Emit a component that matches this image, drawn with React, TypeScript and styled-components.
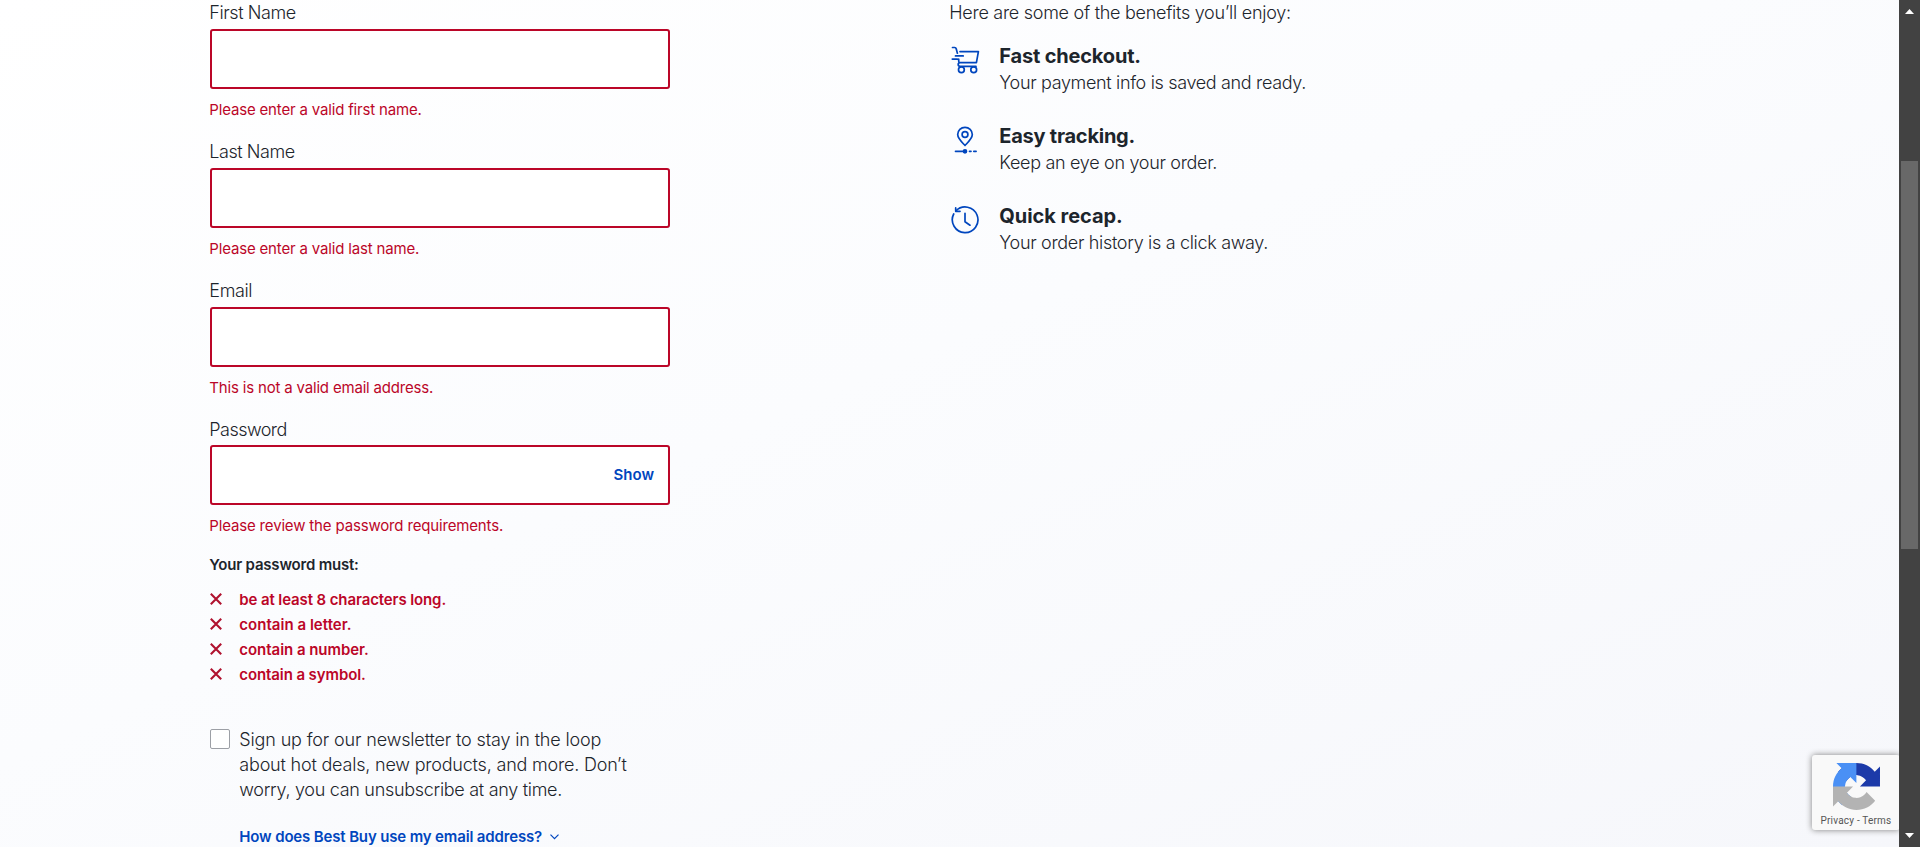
import React from "react";
import styled, { createGlobalStyle } from "styled-components";

const red = "#bb0628";
const blue = "#0046be";
const ink = "#1d252c";

const GlobalStyle = createGlobalStyle`
  * { box-sizing: border-box; }
  body {
    margin: 0;
    overflow: hidden;
    font-family: Inter, "Liberation Sans", sans-serif;
    color: ${ink};
  }
`;

const Screen = styled.div`
  display: flex;
  position: relative;
  width: 100vw;
  height: 100vh;
  overflow: hidden;
`;

const Page = styled.main`
  flex: 1;
  display: flex;
  gap: 280px;
  padding-left: 210px;
  overflow: hidden;
  background: linear-gradient(to bottom right, #ffffff 0%, #fbfcfe 45%, #f6f7fb 100%);
`;

const Form = styled.form`
  width: 460px;
  flex: none;
  display: flex;
  flex-direction: column;
`;

const Text = styled.span<{ $track?: number }>`
  display: block;
  margin-left: -0.7px;
  white-space: nowrap;
  font-size: 18px;
  font-weight: 300;
  line-height: 25px;
  letter-spacing: ${(p) => p.$track ?? 0}px;
`;

const Field = styled.div<{ $compact?: boolean }>`
  display: flex;
  flex-direction: column;
  gap: ${(p) => (p.$compact ? 3 : 4)}px;
  margin-bottom: 19px;
`;

const InputBox = styled.div`
  display: flex;
  height: 60px;
  border: 2px solid ${red};
  border-radius: 3px;
  background: #fff;
`;

const Input = styled.input`
  flex: 1;
  min-width: 0;
  border: 0;
  padding: 0 14px;
  background: transparent;
  outline: none;
  font-size: 18px;
`;

const ShowButton = styled.button`
  border: 0;
  padding: 0 14px 0 13px;
  background: none;
  color: ${blue};
  font: 600 15px/20px Inter, sans-serif;
`;

const FieldError = styled(Text)`
  margin-top: 7px;
  color: ${red};
  font-size: 15px;
  font-weight: 370;
  line-height: 20px;
`;

const PasswordError = styled(FieldError)`
  margin-top: 8px;
`;

const RulesTitle = styled(Text)`
  font-size: 15px;
  font-weight: 600;
  line-height: 20px;
`;

const Rules = styled.ul`
  list-style: none;
  margin: 12px 0 40px;
  padding: 0;
`;

const Rule = styled.li`
  display: flex;
  align-items: center;
  gap: 18px;
  height: 25px;
`;

const RuleText = styled(Text)`
  color: ${red};
  font-size: 15px;
  font-weight: 600;
`;

const Cross = styled.svg`
  flex: none;
  width: 12px;
  height: 12px;
  margin-top: -1px;
  stroke: #b0122f;
  stroke-width: 2.1;
`;

const Newsletter = styled.label`
  display: flex;
  gap: 10px;
`;

const Checkbox = styled.span`
  flex: none;
  width: 20px;
  height: 20px;
  margin-top: 2px;
  border: 1px solid #9c9fa5;
  border-radius: 2px;
  background: #fff;
`;

const InfoLink = styled.a`
  display: flex;
  align-items: center;
  gap: 8px;
  margin: 25px 0 0 30px;
  color: ${blue};
`;

const InfoText = styled(Text)`
  font-size: 15px;
  font-weight: 600;
  line-height: 20px;
`;

const Chevron = styled.svg`
  width: 9px;
  height: 6px;
  fill: none;
  stroke: ${blue};
  stroke-width: 1.2;
`;

const Benefits = styled.section`
  display: flex;
  flex-direction: column;
`;

const BenefitList = styled.div`
  display: flex;
  flex-direction: column;
  gap: 28px;
  margin-top: 18px;
`;

const Benefit = styled.div`
  display: flex;
  gap: 20px;
`;

const BenefitTitle = styled(Text)`
  padding-top: 1px;
  margin-bottom: 1px;
  font-size: 20px;
  font-weight: 750;
`;

const Icon = styled.svg`
  flex: none;
  width: 30px;
  height: 30px;
  margin-top: 2px;
  fill: none;
  stroke: ${blue};
  stroke-width: 1.7;
  stroke-linecap: round;
  stroke-linejoin: round;
`;

const Scrollbar = styled.div`
  position: relative;
  z-index: 2;
  flex: none;
  display: flex;
  flex-direction: column;
  justify-content: space-between;
  align-items: center;
  width: 21px;
  padding: 9px 0;
  background: #424242;
`;

const Thumb = styled.div`
  width: 17px;
  height: 388px;
  margin-bottom: 137px;
  background: #686868;
`;

const Arrow = styled.svg`
  width: 9px;
  height: 5px;
  fill: #fff;
`;

const Recaptcha = styled.div`
  position: absolute;
  right: 20px;
  bottom: 17px;
  z-index: 1;
  display: flex;
  flex-direction: column;
  align-items: center;
  width: 88px;
  height: 75px;
  padding-top: 8px;
  border-radius: 3px;
  background: #f9f9f9;
  box-shadow: 0 0 6px #808080;
`;

const RecaptchaLogo = styled.svg`
  width: 47px;
  height: 47px;
`;

const RecaptchaLinks = styled.span`
  margin-top: 5px;
  color: #555;
  font: 400 10px/12px Roboto, sans-serif;
  letter-spacing: 0.2px;
  white-space: nowrap;
`;

const nameFields = [
  { label: "First Name", lt: -0.42, error: "Please enter a valid first name.", et: -0.17 },
  { label: "Last Name", lt: -0.45, error: "Please enter a valid last name.", et: -0.17 },
];

const rules = [
  { text: "be at least 8 characters long.", t: -0.11 },
  { text: "contain a letter.", t: 0.03 },
  { text: "contain a number.", t: -0.04 },
  { text: "contain a symbol.", t: -0.1 },
];

const newsletter = [
  { text: "Sign up for our newsletter to stay in the loop", t: -0.15 },
  { text: "about hot deals, new products, and more. Don’t", t: -0.2 },
  { text: "worry, you can unsubscribe at any time.", t: -0.3 },
];

const CartIcon = () => (
  <Icon viewBox="0 0 30 30">
    <path d="M2.5 2.500h2.200c.8 0 1.300.4 1.500 1.200L7.400 8.200M10 6.600h18.400l-2 11.100H10.200c-1 0-1.500-.5-1.500-1.500v-2M5.500 10.900h7.700M2.300 14.100h5M10.200 17.700c-1.500 0-2 .8-2 1.800s.7 1.800 2 1.800h15.800" />
    <circle cx="11.400" cy="24.800" r="2.900" />
    <circle cx="23.700" cy="24.800" r="2.900" />
  </Icon>
);

const PinIcon = () => (
  <Icon viewBox="0 0 30 30">
    <path d="M15 20.500C11.500 16.800 7.700 13.500 7.700 9.600a7.300 7.300 0 0 1 14.600 0C22.300 13.500 18.500 16.800 15 20.500Z" />
    <circle cx="15" cy="9.500" r="2.900" />
    <path d="M5.500 26.300H15M19.500 26.300h1.500M23.800 26.300h2.300" />
    <circle cx="15" cy="26.300" r="1.500" fill={blue} />
  </Icon>
);

const HistoryIcon = () => (
  <Icon viewBox="0 0 30 30">
    <path d="M5.900 5.900A12.800 12.800 0 1 1 3.700 9" />
    <path d="M5.700 2.900V6.300H10M15 8.300v8.400l5 3.500" />
  </Icon>
);

export default function App() {
  return (
    <Screen>
      <GlobalStyle />
      <Page>
        <Form>
          {nameFields.map((f) => (
            <Field key={f.label}>
              <Text $track={f.lt}>{f.label}</Text>
              <InputBox><Input /></InputBox>
              <FieldError $track={f.et}>{f.error}</FieldError>
            </Field>
          ))}
          <Field>
            <Text $track={-0.4}>Email</Text>
            <InputBox><Input type="email" /></InputBox>
            <FieldError $track={-0.18}>This is not a valid email address.</FieldError>
          </Field>
          <Field $compact>
            <Text $track={-0.54}>Password</Text>
            <InputBox>
              <Input type="password" />
              <ShowButton type="button">Show</ShowButton>
            </InputBox>
            <PasswordError $track={-0.16}>Please review the password requirements.</PasswordError>
          </Field>
          <RulesTitle $track={-0.2}>Your password must:</RulesTitle>
          <Rules>
            {rules.map((r) => (
              <Rule key={r.text}>
                <Cross viewBox="0 0 12 12"><path d="M.8.8l10.400 10.400M11.200.8L.8 11.200" /></Cross>
                <RuleText $track={r.t}>{r.text}</RuleText>
              </Rule>
            ))}
          </Rules>
          <Newsletter>
            <Checkbox />
            <div>
              {newsletter.map((l) => (
                <Text key={l.text} $track={l.t}>{l.text}</Text>
              ))}
            </div>
          </Newsletter>
          <InfoLink>
            <InfoText $track={-0.15}>How does Best Buy use my email address?</InfoText>
            <Chevron viewBox="0 0 9 6"><path d="M.5.7l4 4 4-4" /></Chevron>
          </InfoLink>
        </Form>
        <Benefits>
          <Text $track={-0.28}>Here are some of the benefits you’ll enjoy:</Text>
          <BenefitList>
            <Benefit>
              <CartIcon />
              <div>
                <BenefitTitle $track={-0.18}>Fast checkout.</BenefitTitle>
                <Text $track={-0.34}>Your payment info is saved and ready.</Text>
              </div>
            </Benefit>
            <Benefit>
              <PinIcon />
              <div>
                <BenefitTitle $track={-0.25}>Easy tracking.</BenefitTitle>
                <Text $track={-0.31}>Keep an eye on your order.</Text>
              </div>
            </Benefit>
            <Benefit>
              <HistoryIcon />
              <div>
                <BenefitTitle $track={-0.05}>Quick recap.</BenefitTitle>
                <Text $track={-0.32}>Your order history is a click away.</Text>
              </div>
            </Benefit>
          </BenefitList>
        </Benefits>
      </Page>
      <Recaptcha>
        <RecaptchaLogo viewBox="0 0 64 64">
          <path fill="#1c3aa9" d="M64 31.955l-.033-1.370V4.687l-7.160 7.160C50.948 4.674 42.033.093 32.050.093c-10.400 0-19.622 4.960-25.458 12.640l11.736 11.860a15.550 15.550 0 0 1 4.754-5.334c2.050-1.600 4.952-2.906 8.968-2.906.485 0 .860.057 1.135.163 4.976.393 9.288 3.140 11.828 7.124l-8.307 8.307L64 31.953" />
          <path fill="#4a90f5" d="M31.862.094l-1.370.033H4.594l7.160 7.160C4.580 13.147 0 22.060 0 32.046c0 10.400 4.960 19.622 12.640 25.458L24.500 45.768a15.550 15.550 0 0 1-5.334-4.754c-1.600-2.050-2.906-4.952-2.906-8.968 0-.485.057-.860.163-1.135.393-4.976 3.140-9.288 7.124-11.828l8.307 8.307L31.860.095" />
          <path fill="#b3b3b3" d="M.001 32.045l.033 1.370v25.898l7.160-7.160c5.860 7.173 14.774 11.754 24.760 11.754 10.400 0 19.622-4.960 25.458-12.640l-11.736-11.860a15.550 15.550 0 0 1-4.754 5.334c-2.050 1.600-4.952 2.906-8.968 2.906-.485 0-.860-.057-1.135-.163-4.976-.393-9.288-3.140-11.828-7.124l8.307-8.307c-10.522.040-22.400.066-27.295-.005" />
        </RecaptchaLogo>
        <RecaptchaLinks>Privacy - Terms</RecaptchaLinks>
      </Recaptcha>
      <Scrollbar>
        <Arrow viewBox="0 0 9 5"><path d="M4.500 0L9 5H0Z" /></Arrow>
        <Thumb />
        <Arrow viewBox="0 0 9 5"><path d="M0 0h9L4.500 5Z" /></Arrow>
      </Scrollbar>
    </Screen>
  );
}
